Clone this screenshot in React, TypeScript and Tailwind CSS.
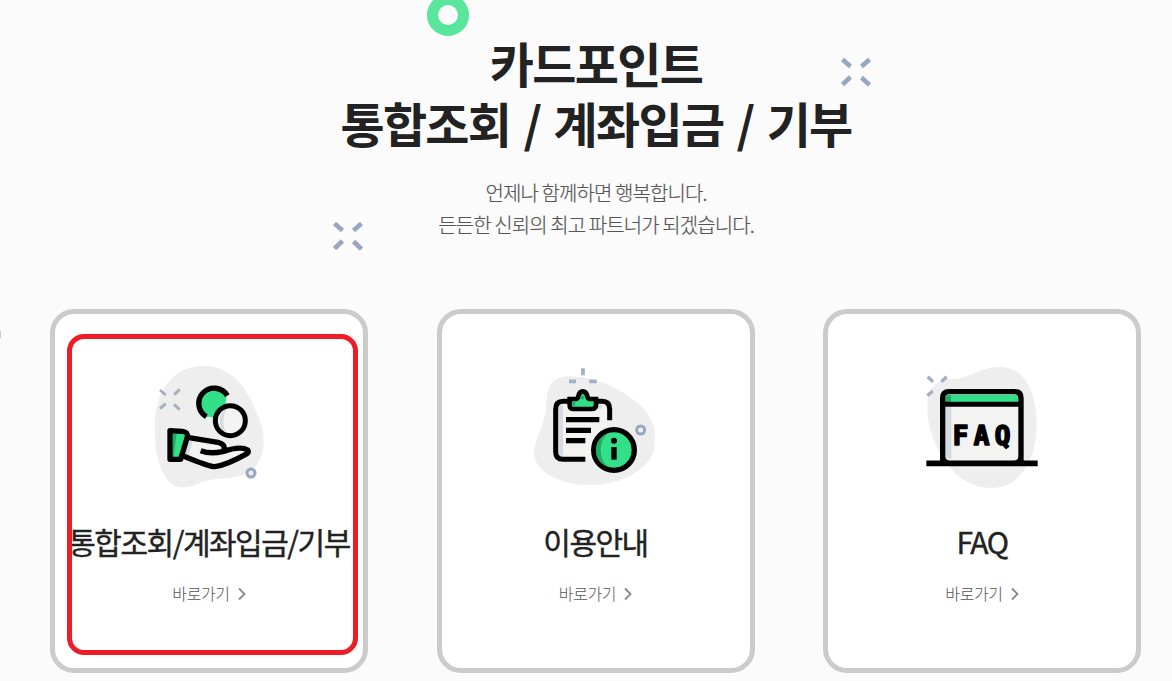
import type { ReactNode } from 'react';

interface MenuCard {
  title: string;
  icon: ReactNode;
  highlighted?: boolean;
}

function Sparkle({ className }: { className: string }) {
  return (
    <svg viewBox="0 0 30 30" className={className} fill="none" stroke="#98a7bf" strokeWidth="4.6">
      <path d="M1.5 2.5l8 7M28.5 2.5l-8 7M1.5 27.5l8-7.5M28.5 28l-8-7.5" />
    </svg>
  );
}

function HandIcon() {
  return (
    <svg viewBox="-3 0 420 435" className="h-[145px] w-[140px]" fill="none">
      <path
        d="M190 33C250 32 300 70 330 130C355 185 372 215 371 258C370 325 335 358 285 366C245 372 215 370 185 382C150 398 120 404 95 386C60 362 44 290 44 220C44 110 95 34 190 33Z"
        fill="#eeeeee"
      />
      <path d="M60 105l17 15M119 103l-16 16M60 161l17-15M119 164l-17-16" stroke="#a2afc5" strokeWidth="9" />
      <circle cx="333" cy="354" r="12" fill="#eeeeee" stroke="#98a7bf" strokeWidth="9" />
      <path d="M196 183A46 46 0 1 1 260 121L256 152L228 190Z" fill="#33e08a" />
      <path d="M203 108C184 121 178 150 190 170L205 187C183 180 174 160 176 143C178 125 188 113 203 108Z" fill="#1dae66" />
      <path d="M199 185A46 46 0 1 1 262 122" stroke="#000" strokeWidth="16" />
      <circle cx="271" cy="197" r="45" fill="#f3f3f2" stroke="#000" strokeWidth="15" />
      <path d="M262 161C232 172 232 219 259 233C247 215 246 180 262 161Z" fill="#d5dbe5" />
      <path d="M142 247L237 264Q256 270 252 284L286 281L322 292C282 318 253 332 218 335L130 303Z" fill="#f3f3f2" />
      <path d="M140 257L158 260Q148 280 149 304L134 300Z" fill="#d5dbe5" />
      <path d="M92 227L127 229Q143 231 142 246L122 313H92Z" fill="#33e08a" />
      <path d="M98 232H110L101 310H96Z" fill="#1dae66" />
      <path
        d="M90 227L127 229Q145 231 142 246L122 313H90Z"
        stroke="#000"
        strokeWidth="16"
        strokeLinejoin="round"
      />
      <path
        d="M142 247L234 262Q256 267 252 284M182 287Q209 298 248 290Q302 272 323 285Q328 291 321 296C282 318 253 332 224 335Q210 336 130 303"
        stroke="#000"
        strokeWidth="16"
        strokeLinejoin="round"
      />
    </svg>
  );
}

function GuideIcon() {
  return (
    <svg viewBox="3 0 420 435" className="h-[145px] w-[140px]" fill="none">
      <path
        d="M132 64C190 66 240 82 290 110C345 142 388 185 389 235C391 270 389 300 365 325C330 363 270 390 195 390C115 389 49 360 31 315C22 290 32 258 48 220C67 175 61 145 68 112C75 78 98 64 132 64Z"
        fill="#eeeeee"
      />
      <path d="M174 40V61M132 79H153M193 79H215" stroke="#a2afc5" strokeWidth="11" />
      <circle cx="347" cy="225" r="12" fill="#eeeeee" stroke="#98a7bf" strokeWidth="9" />
      <path d="M92 158Q92 139 115 139H231Q254 140 254 195V313H112Q92 312 92 292Z" fill="#f3f3f2" />
      <path d="M100 151H114V303Q104 303 100 291Z" fill="#d5dbe5" />
      <path d="M218 150H233L227 162H218Z" fill="#d5dbe5" />
      <path
        d="M134 139H115Q92 139 92 162V291Q92 313 114 313H181M214 139H231Q254 139 254 162V196"
        stroke="#000"
        strokeWidth="15"
      />
      <path
        d="M134 132H151Q158 132 160 124Q163 109 173 109Q184 109 187 124Q189 132 196 132H213V151Q212 162 201 162H146Q134 162 134 151Z"
        fill="#33e08a"
        stroke="#000"
        strokeWidth="14"
      />
      <path d="M165 132Q165 121 176 121V133Z" fill="#1dae66" />
      <path d="M142 140H152L148 156H142Z" fill="#1dae66" />
      <path d="M123 194H223M123 226H198M123 257H181" stroke="#000" strokeWidth="16" />
      <circle cx="267" cy="285" r="61" fill="#33e08a" stroke="#000" strokeWidth="16" />
      <path d="M248 236C201 250 201 322 248 334C220 311 220 259 248 236Z" fill="#1dae66" />
      <circle cx="267" cy="257" r="9" fill="#000" />
      <path d="M267 276V314" stroke="#000" strokeWidth="16" />
    </svg>
  );
}

function FaqIcon() {
  return (
    <svg viewBox="6 0 420 435" className="h-[145px] w-[140px]" fill="none">
      <path
        d="M52 150C54 95 85 72 125 72C185 70 205 37 270 36C345 36 378 110 380 205C382 305 335 398 245 399C190 399 145 375 110 325C75 275 50 215 52 150Z"
        fill="#eeeeee"
      />
      <path d="M53 65l16 15M110 65l-16 15M52 122l16-14" stroke="#a2afc5" strokeWidth="10" />
      <path d="M98 129Q98 110 117 110H314Q333 110 333 129V318H98Z" fill="#f3f3f2" />
      <path d="M106 154H124V312Q106 310 106 300Z" fill="#d5dbe5" />
      <path d="M106 142V128Q107 119 117 119H314Q325 119 325 128V142Z" fill="#33e08a" />
      <path d="M106 142V128Q107 119 123 119V142Z" fill="#1dae66" />
      <path d="M98 318V129Q98 110 117 110H314Q333 110 333 129V318" stroke="#000" strokeWidth="16" />
      <path d="M98 148H333" stroke="#000" strokeWidth="15" />
      <path d="M104 318L104 304Q108 316 120 318ZM327 318V304Q323 316 311 318Z" fill="#000" />
      <path d="M49 325H383" stroke="#000" strokeWidth="17" />
      <text
        x="128 191 254"
        y="269"
        fill="#000"
        stroke="#000"
        strokeWidth="5"
        strokeLinejoin="round"
        className="font-['DejaVu_Sans_Mono',monospace] text-[78px] font-bold"
      >
        FAQ
      </text>
    </svg>
  );
}

const cards: MenuCard[] = [
  { title: '통합조회/계좌입금/기부', icon: <HandIcon />, highlighted: true },
  { title: '이용안내', icon: <GuideIcon /> },
  { title: 'FAQ', icon: <FaqIcon /> },
];

export default function App() {
  return (
    <main className="relative h-[681px] w-[1172px] overflow-hidden bg-[#fbfbfb] font-['Noto_Sans_CJK_KR',sans-serif]">
      <div className="absolute -top-[6px] left-[427px] size-[42px] rounded-full border-[11px] border-[#57e69b]" />
      <Sparkle className="absolute top-[57px] left-[841px] size-[30px]" />
      <Sparkle className="absolute top-[221px] left-[333px] size-[30px]" />
      <div className="absolute top-[331px] left-0 h-[7px] w-px bg-[#cccccc]" />

      <header className="px-5 pt-8 pb-[68px] text-center">
        <h1 className="pl-5 text-[48px] leading-[60px] font-bold tracking-[-1.7px] text-[#222222] [word-spacing:4px]">
          카드포인트
          <br />
          통합조회 / 계좌입금 / 기부
        </h1>
        <p className="mt-[25px] pl-5 text-[20px] leading-[32px] font-light tracking-[-0.9px] text-[#555555] [-webkit-text-stroke:0.2px_#555555]">
          언제나 함께하면 행복합니다.
          <br />
          든든한 신뢰의 최고 파트너가 되겠습니다.
        </p>
      </header>

      <div className="flex justify-between pr-[31px] pl-[50px]">
        {cards.map((card) => (
          <a
            key={card.title}
            className="relative flex h-[364px] w-[318px] flex-col items-center rounded-[24px] border-[5px] border-[#cbcbcb] bg-white pt-[41px]"
          >
            {card.icon}
            <h2 className="mt-[19px] text-[30px] leading-[44px] font-normal tracking-[-1.5px] whitespace-nowrap text-[#222222] [-webkit-text-stroke:0.4px_#222222]">
              {card.title}
            </h2>
            <span className="mt-[18px] flex items-center text-[16px] leading-[24px] font-light tracking-[-0.4px] text-[#555555]">
              바로가기
              <svg viewBox="0 0 8 14" className="mt-px ml-2 h-[14px] w-[8px]" fill="none" stroke="#888888" strokeWidth="1.8">
                <path d="M1 1.5L6.5 7L1 12.5" />
              </svg>
            </span>
            {card.highlighted && (
              <span className="absolute top-[20px] left-[12px] h-[321px] w-[291px] rounded-[17px] border-[5px] border-[#ee1c25]" />
            )}
          </a>
        ))}
      </div>
    </main>
  );
}
